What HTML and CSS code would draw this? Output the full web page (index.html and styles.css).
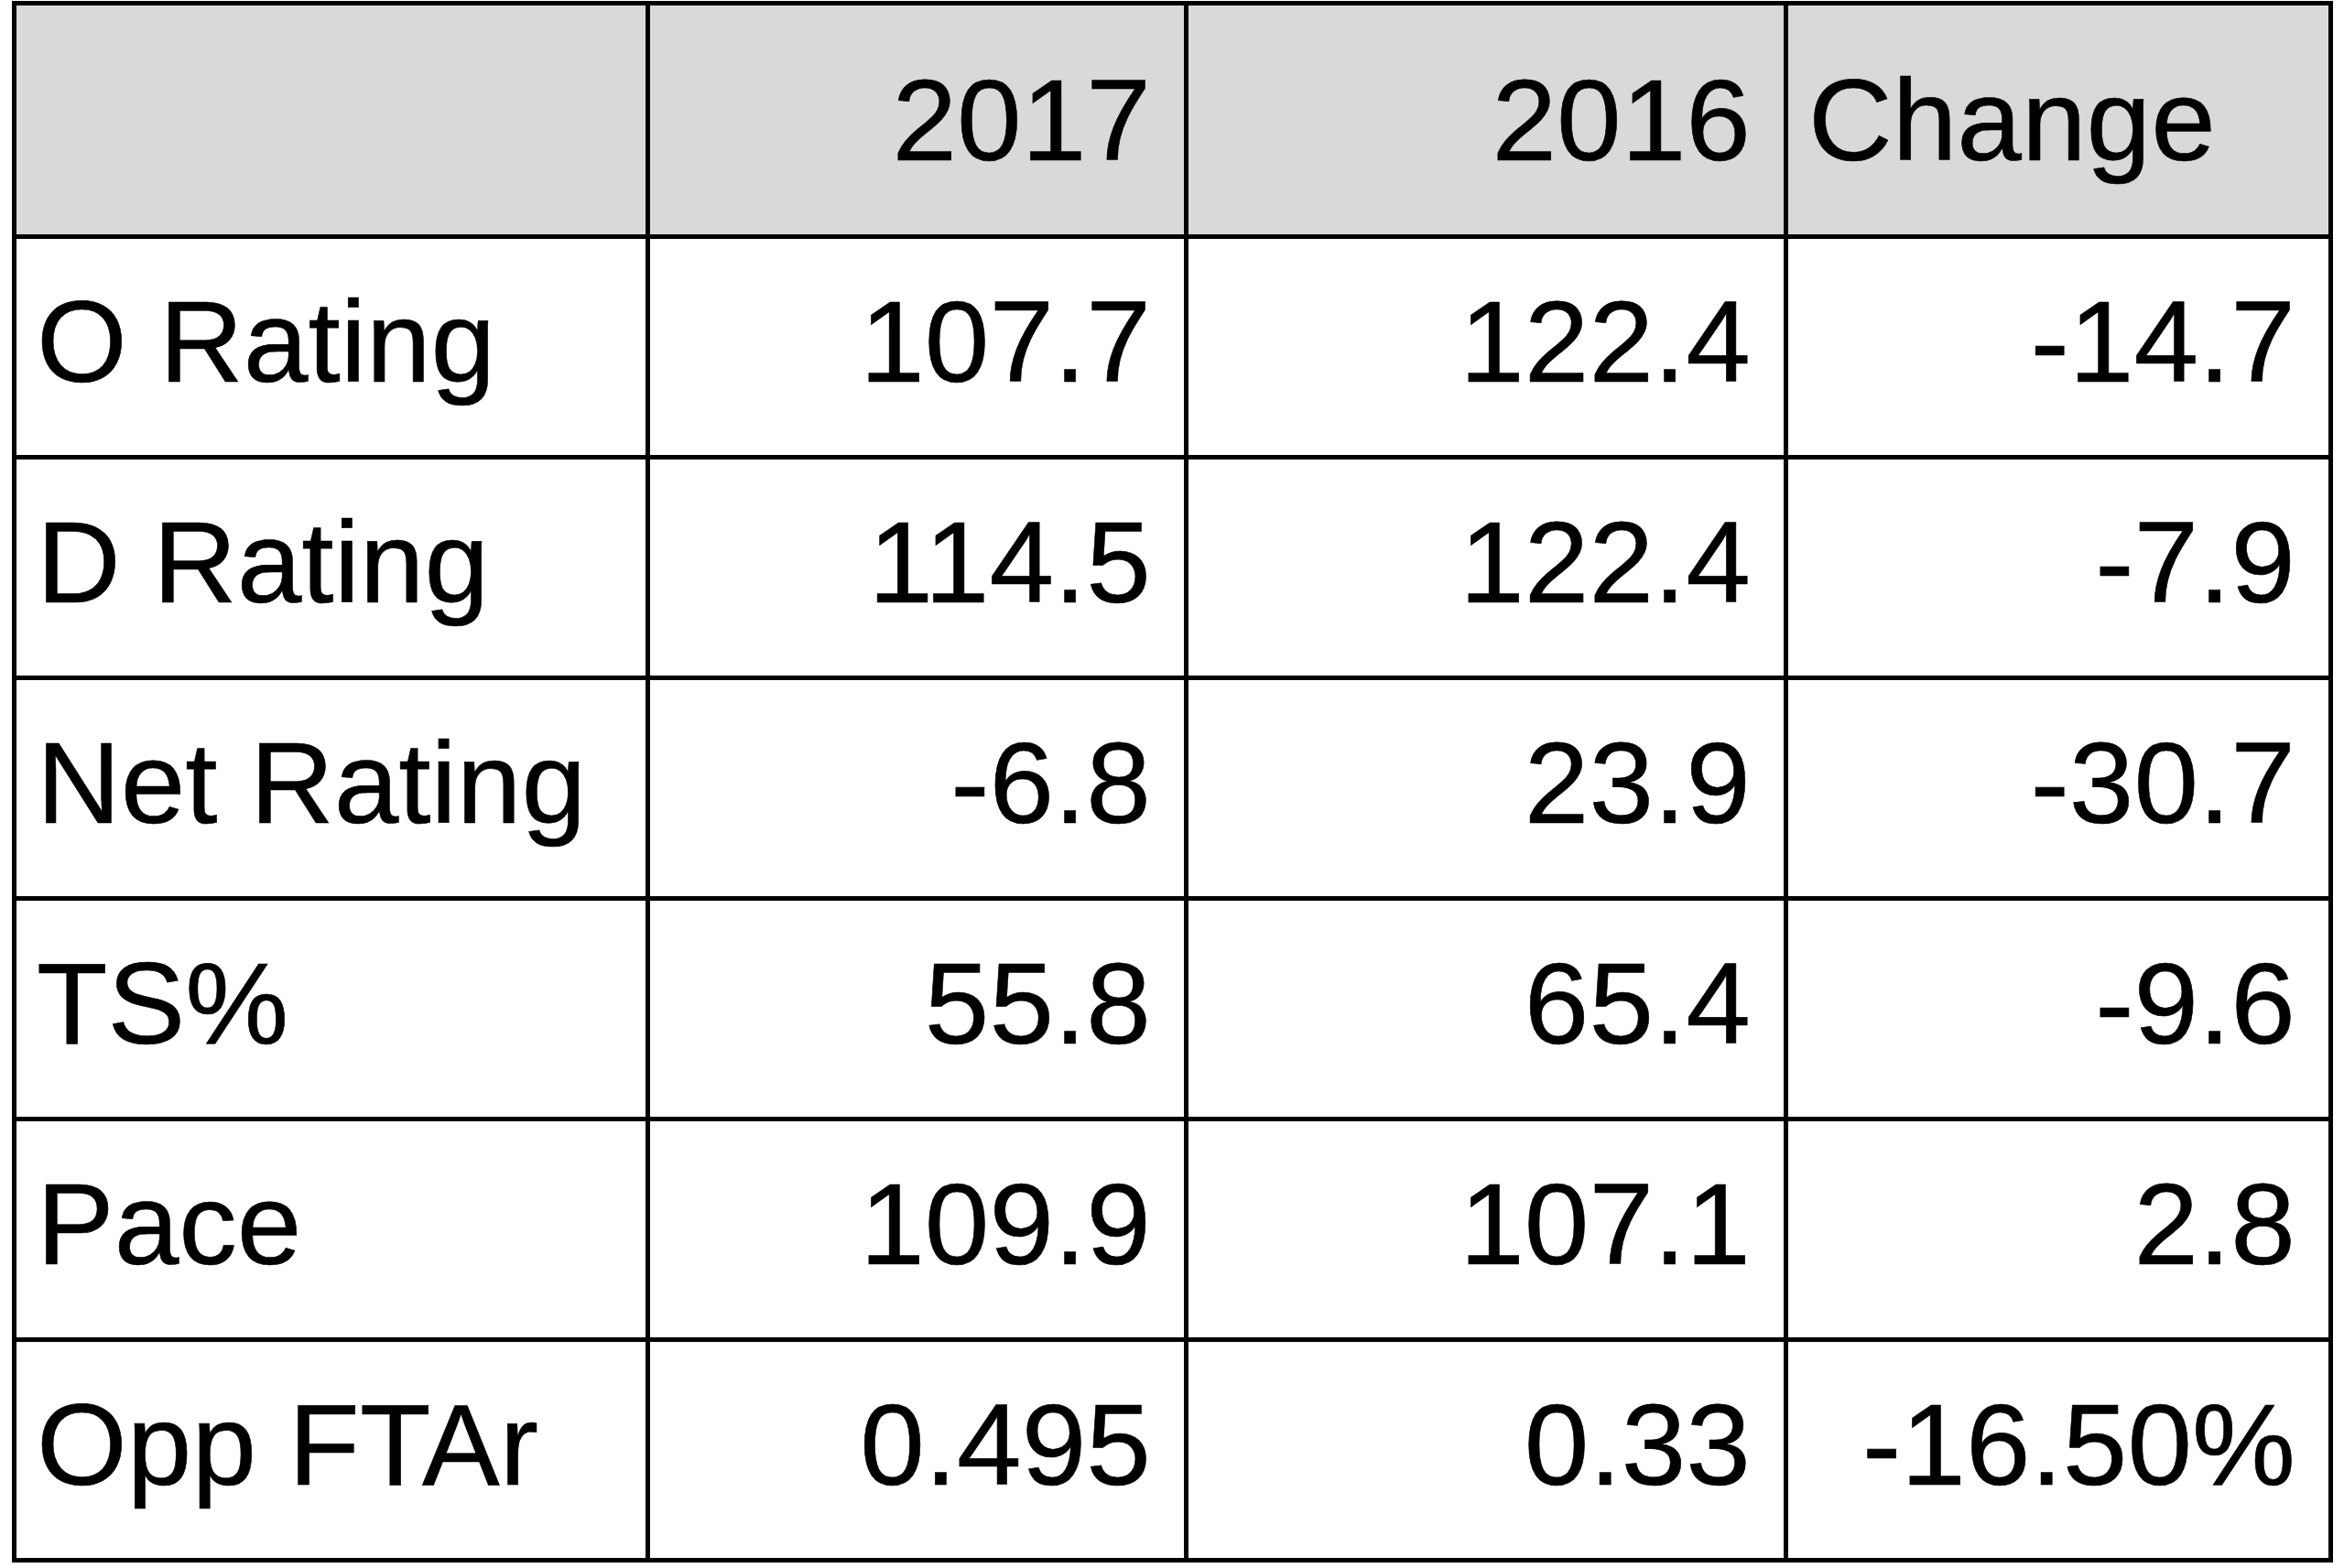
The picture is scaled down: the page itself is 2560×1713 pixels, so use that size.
FILE: index.html
```html
<!DOCTYPE html>
<html lang="en">
<head>
<meta charset="utf-8">
<title>Stats</title>
<link rel="stylesheet" href="styles.css">
</head>
<body>
<table class="stats">
  <thead>
    <tr class="head-row">
      <th class="c-label"></th>
      <th class="c-2017 num">2017</th>
      <th class="c-2016 num">2016</th>
      <th class="c-change txt">Change</th>
    </tr>
  </thead>
  <tbody>
    <tr><td class="txt">O Rating</td><td class="num">107.7</td><td class="num">122.4</td><td class="num">-14.7</td></tr>
    <tr><td class="txt">D Rating</td><td class="num">114.5</td><td class="num">122.4</td><td class="num">-7.9</td></tr>
    <tr><td class="txt">Net Rating</td><td class="num">-6.8</td><td class="num">23.9</td><td class="num">-30.7</td></tr>
    <tr><td class="txt">TS%</td><td class="num">55.8</td><td class="num">65.4</td><td class="num">-9.6</td></tr>
    <tr><td class="txt">Pace</td><td class="num">109.9</td><td class="num">107.1</td><td class="num">2.8</td></tr>
    <tr><td class="txt">Opp FTAr</td><td class="num">0.495</td><td class="num">0.33</td><td class="num">-16.50%</td></tr>
  </tbody>
</table>
</body>
</html>
```
FILE: styles.css
```css
html, body {
  margin: 0;
  padding: 0;
  background: #ffffff;
}

body {
  font-family: "Liberation Sans", Arial, sans-serif;
  color: #000000;
}

.stats {
  margin: 1px 0 0 13px;
  border-collapse: separate;
  border-spacing: 0;
  border-top: 5px solid #000;
  border-left: 5px solid #000;
  table-layout: fixed;
  width: 2535px;
}

.stats th,
.stats td {
  box-sizing: border-box;
  border-right: 5px solid #000;
  border-bottom: 5px solid #000;
  font-size: 127px;
  font-weight: normal;
  line-height: normal;
  vertical-align: middle;
  padding: 0;
  height: 241px;
  white-space: nowrap;
  -webkit-text-stroke: 0.6px #000;
}

.stats td {
  padding-bottom: 12px;
}

.head-row th {
  background: #d9d9d9;
  height: 255px;
}

.c-label { width: 692px; }
.c-2017 { width: 588px; }
.c-2016 { width: 655px; }
.c-change { width: 595px; }

.txt {
  text-align: left;
  padding-left: 22px !important;
}

.num {
  text-align: right;
  padding-right: 36px !important;
}
```
